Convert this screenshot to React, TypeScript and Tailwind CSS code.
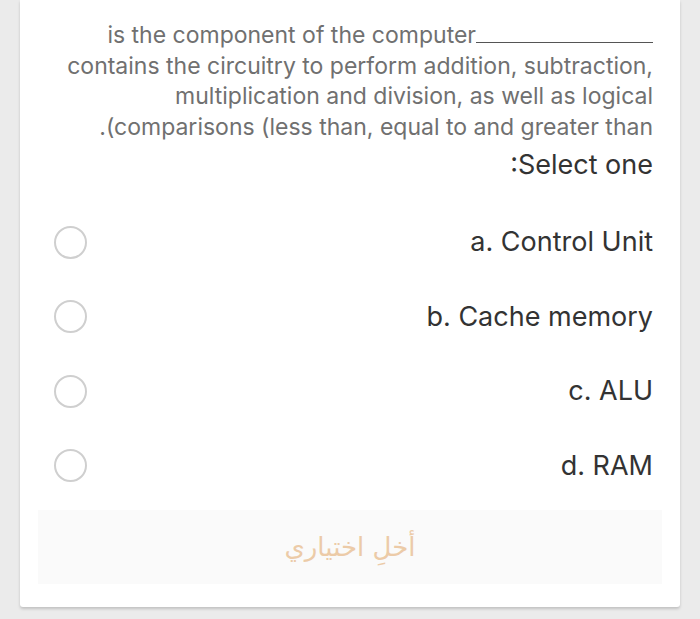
import { useState } from "react"

const options = [
  { key: "a", label: "a. Control Unit" },
  { key: "b", label: "b. Cache memory" },
  { key: "c", label: "c. ALU" },
  { key: "d", label: "d. RAM" },
]

export default function App() {
  const [picked, setPicked] = useState<string | null>(null)

  return (
    <div className="min-h-[619px] bg-[#ebebeb] px-[20px]" style={{ fontFamily: "Inter, 'Liberation Sans', sans-serif" }}>
      <div className="bg-white rounded-b-[3px] shadow-[0_2px_3px_rgba(0,0,0,0.18)] pb-[23px]">
        <div className="pr-[27px] pt-[20px] text-right text-[23px] leading-[30.5px] text-[#707070]">
          <div>
            is the component of the computer
            <span className="inline-block w-[177px] border-b border-[#555] align-baseline" />
          </div>
          <div>contains the circuitry to perform addition, subtraction,</div>
          <div>multiplication and division, as well as logical</div>
          <div>.(comparisons (less than, equal to and greater than</div>
        </div>

        <div className="pr-[27px] pt-[6px] text-right text-[27px] leading-[34px] text-[#333]">:Select one</div>

        <div className="mt-[23px] flex flex-col">
          {options.map((o) => (
            <button
              key={o.key}
              onClick={() => setPicked(o.key)}
              className="flex h-[74.5px] items-center justify-between pl-[34px] pr-[27px]"
            >
              <span
                className={`h-[33px] w-[33px] rounded-full border-2 ${
                  picked === o.key ? "border-[#e8a85f]" : "border-[#cfcfcf]"
                }`}
              />
              <span className="text-[27px] text-[#333]">{o.label}</span>
            </button>
          ))}
        </div>

        <div className="mx-[18px] mt-[7px] flex h-[74px] items-center justify-center bg-[#fafafa]">
          <span
            dir="rtl"
            className="text-[26px] text-[#eccba8]"
            style={{ fontFamily: "'DejaVu Sans', 'Noto Sans', sans-serif" }}
          >
            أخلِ اختياري
          </span>
        </div>
      </div>
    </div>
  )
}
